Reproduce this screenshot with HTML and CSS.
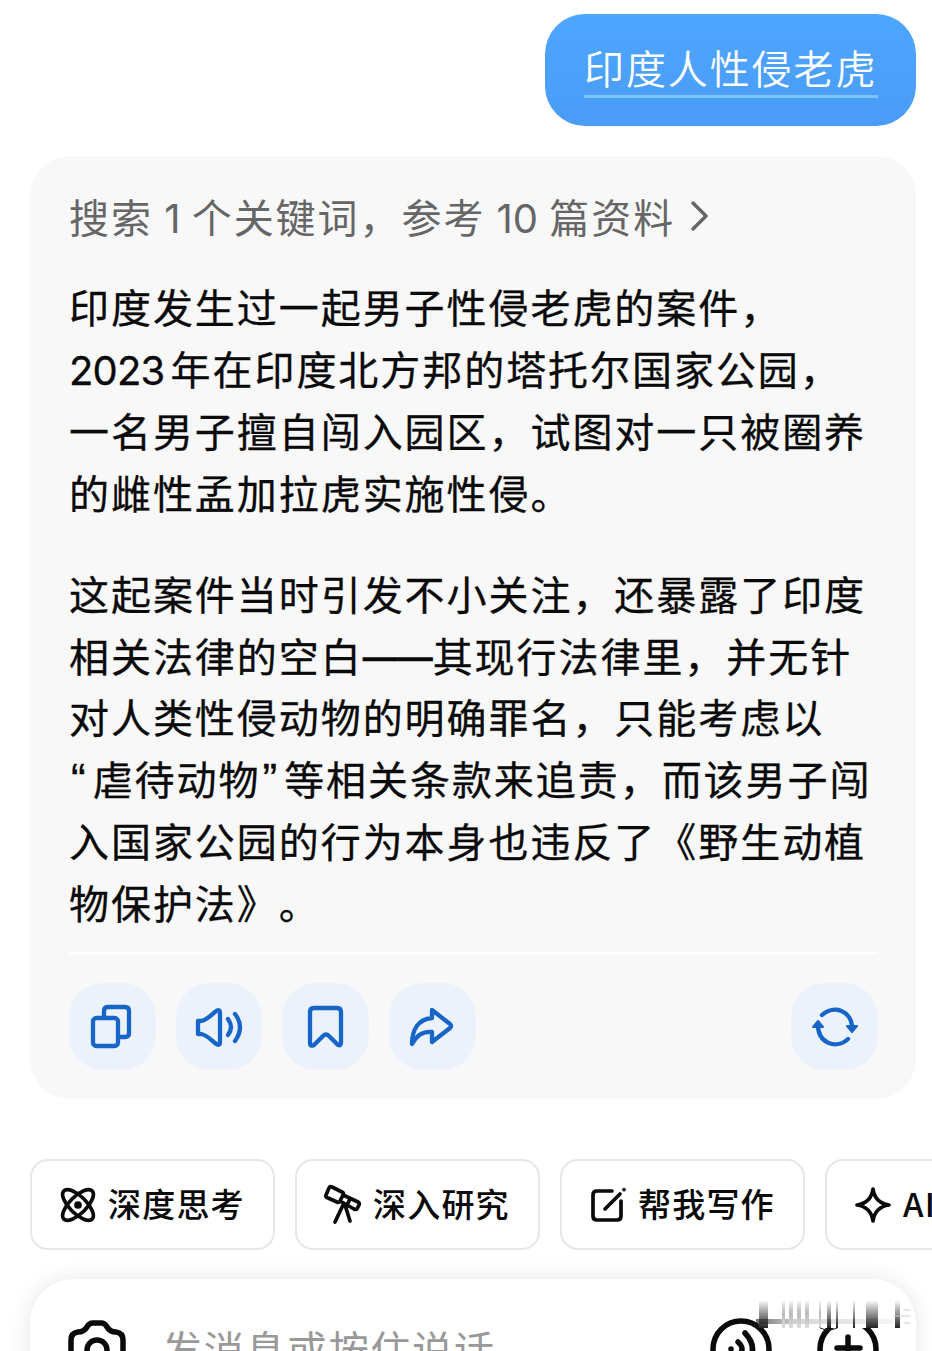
FILE: index.html
```html
<!DOCTYPE html>
<html lang="zh-CN">
<head>
  <meta charset="UTF-8">
  <title>对话</title>
  <link rel="stylesheet" href="styles.css">
</head>
<body>

  <main class="chat">
    <div class="question"><span>印度人性侵老虎</span></div>

    <section class="answer">
      <div class="source">
        <span>搜索<span class="num"> 1 </span>个关键词，参考<span class="num"> 10 </span>篇资料</span>
        <svg width="20" height="32" viewBox="0 0 20 32"><path d="M3 3l13 13L3 29"/></svg>
      </div>

      <p>印度发生过一起男子性侵老虎的案件，<br><span class="num">2023</span>年在印度北方邦的塔托尔国家公园，<br>一名男子擅自闯入园区，试图对一只被圈养<br>的雌性孟加拉虎实施性侵。</p>
      <p>这起案件当时引发不小关注，还暴露了印度<br>相关法律的空白<span class="dash">——</span>其现行法律里，并无针<br>对人类性侵动物的明确罪名，只能考虑以<br><span class="quote">“</span>虐待动物<span class="quote">”</span>等相关条款来追责，而该男子闯<br>入国家公园的行为本身也违反了《野生动植<br>物保护法》。</p>

      <div class="actions">
        <button type="button" aria-label="复制">
          <svg width="44" height="44" viewBox="0 0 44 44"><path d="M14 12V6q0-4 4-4h17q4 0 4 4v22q0 4-4 4h-5"/><rect x="3" y="13" width="25" height="28" rx="3.5"/></svg>
        </button>
        <button type="button" aria-label="朗读">
          <svg width="50" height="44" viewBox="0 0 50 44"><path d="M4 16h3c6-1 10-6 14-9q5-4 5 1v29q0 5-5 1c-4-3-8-8-14-9H4z"/><path d="M34 14q6 8 0 16M41 9q10 13 0 27"/></svg>
        </button>
        <button type="button" aria-label="收藏">
          <svg width="44" height="44" viewBox="0 0 44 44"><path d="M6 7q0-4 4-4h23q4 0 4 4v31q0 3-3 2L25 31q-3-3-6 0l-9 9q-4 2-4-2z"/></svg>
        </button>
        <button type="button" aria-label="分享">
          <svg width="46" height="44" viewBox="0 0 46 44"><path d="M23 5l18 14q2 2 0 4L23 37V27C12 26 7 32 3 39 3 25 9 14 23 13z"/></svg>
        </button>
        <button type="button" class="refresh" aria-label="重新生成">
          <svg width="50" height="44" viewBox="0 0 50 44"><path d="M12 10C24-1 42 6 42 23M38 34C26 45 8 38 8 20"/><path class="solid" d="M37 21h10l-5 6zM3 22h10l-5-6z"/></svg>
        </button>
      </div>
    </section>

    <nav class="tools">
      <a class="tool">
        <svg width="36" height="36" viewBox="0 0 36 36"><ellipse cx="18" cy="18" rx="20" ry="8.5" transform="rotate(45 18 18)"/><ellipse cx="18" cy="18" rx="20" ry="8.5" transform="rotate(-45 18 18)"/><circle class="solid" cx="18" cy="18" r="2"/></svg>
        <span>深度思考</span>
      </a>
      <a class="tool">
        <svg width="36" height="36" viewBox="0 0 36 36"><path d="M7 0l10 5q2 1 1 3l-3 6q-1 2-3 1L3 11q-3-1-2-3l3-7q1-2 3-1zM18 8l15 7q2 1 1 3l-2 4q-1 1-3 0l-14-8M25 12l-3 6M18 18l-8 17M20 18l5 16"/></svg>
        <span>深入研究</span>
      </a>
      <a class="tool">
        <svg width="36" height="36" viewBox="0 0 36 36"><path d="M22 4H7Q3 4 3 8v21q0 4 4 4h20q4 0 4-4V14"/><path d="M15 22L30 7M34 2.5v.1"/></svg>
        <span>帮我写作</span>
      </a>
      <a class="tool">
        <svg width="36" height="36" viewBox="0 0 36 36"><path d="M18 2q2 14 16 16-14 2-16 16Q16 20 2 18 16 16 18 2z"/></svg>
        <span>AI</span>
      </a>
    </nav>

    <div class="composer">
      <svg class="camera" width="58" height="58" viewBox="0 0 58 58"><path d="M3 44V20q0-7 7-8 6 0 9-5 2-4 6-4h8q4 0 6 4 3 5 9 5 7 1 7 8v24q0 8-8 8H11q-8 0-8-8z"/><circle cx="29" cy="30" r="10"/></svg>
      <span class="placeholder">发消息或按住说话</span>
      <svg class="voice" width="62" height="62" viewBox="0 0 62 62"><circle cx="31" cy="31" r="28"/><path d="M21 31v.1M28 24q8 7 0 14M35 15q15 16 0 32"/></svg>
      <svg class="plus" width="62" height="62" viewBox="0 0 62 62"><circle cx="31" cy="31" r="28"/><path d="M31 19v24M20 30h23"/></svg>
      <svg class="smear" width="154" height="32" viewBox="0 0 154 32">
        <defs>
          <linearGradient id="fade" x2="0" y2="1"><stop stop-color="#222" stop-opacity="0"/><stop offset="1" stop-color="#222"/></linearGradient>
          <linearGradient id="pale" x2="0" y2="1"><stop stop-color="#999" stop-opacity="0"/><stop offset=".5" stop-color="#bbb"/><stop offset="1" stop-color="#ddd"/></linearGradient>
          <linearGradient id="trail"><stop stop-color="#111"/><stop offset=".3" stop-color="#bbb"/><stop offset="1" stop-color="#eee"/></linearGradient>
        </defs>
        <path d="M3 0h128v28H3z" fill="#fff"/>
        <path d="M0 19h138v5H0z" fill="url(#trail)" opacity=".6"/>
        <path d="M3 0h9v28H3zM71 0h4v28h-4zM80 0h2v28h-2zM97 0h2v28h-2zM110 0h12v28h-12zM139 0h5v28h-5z" fill="url(#fade)"/>
        <path d="M26 0h3v28h-3zM33 0h4v28h-4zM41 0h4v28h-4zM49 0h4v28h-4zM63 0h2v28h-2z" fill="url(#pale)"/>
        <path class="line" d="M64 28q9 4 17 0"/>
        <path class="line thin" d="M148 10h6M138 16h16M148 23h6"/>
      </svg>
    </div>
  </main>

</body>
</html>
```

FILE: styles.css
```css
* {
  box-sizing: border-box;
}
body {
  margin: 0;
  height: 1351px;
  overflow: hidden;
  background: #fff;
  color: #0a0a0a;
  font-family: "Noto Sans CJK SC", sans-serif;
  text-spacing-trim: space-all;
}
svg {
  flex: none;
  overflow: visible;
  fill: none;
  stroke: currentColor;
  stroke-linecap: round;
  stroke-linejoin: round;
}
.solid {
  fill: currentColor;
}
.chat {
  display: flex;
  flex-direction: column;
  height: 1351px;
  padding: 14px 16px 0 30px;
  overflow: hidden;
}
.question {
  flex: none;
  align-self: flex-end;
  width: 371px;
  height: 112px;
  padding: 24px 0 0 39px;
  border-radius: 40px;
  background: linear-gradient(#4ea6fe, #4a9cf6);
  color: #fff;
  font-size: 40px;
  font-weight: 350;
  letter-spacing: 1.9px;
}
.question span {
  display: block;
  width: 294px;
  height: 60px;
  border-bottom: 3px solid #7cc4ff;
  line-height: 59px;
  white-space: nowrap;
}
.answer {
  flex: none;
  height: 943px;
  margin-top: 30px;
  padding: 29px 38px 0 39px;
  border-radius: 40px;
  background: #f8f8f8;
}
.source {
  display: flex;
  align-items: center;
  gap: 15px;
  height: 62px;
  color: #666;
  font-size: 40px;
  letter-spacing: 1.95px;
  line-height: 60px;
  white-space: nowrap;
}
.source svg {
  stroke-width: 3.5;
}
.source .num {
  margin-right: 0;
  letter-spacing: 0;
}
.num {
  margin-right: 6px;
  font-family: Inter, sans-serif;
  letter-spacing: -0.8px;
  line-height: 1;
}
.answer p {
  margin: 29px 0 0;
  font-size: 40px;
  letter-spacing: 1.95px;
  line-height: 61.9px;
  white-space: nowrap;
  -webkit-text-stroke: 0.3px;
}
.answer p + p {
  margin-top: 39px;
}
.dash {
  font-family: "Liberation Sans", sans-serif;
  font-size: 35px;
  font-weight: bold;
  letter-spacing: 0;
  line-height: 1;
  position: relative;
  top: -3px;
}
.quote {
  padding-left: 2px;
  font-family: "Liberation Sans", sans-serif;
  font-size: 44px;
  letter-spacing: 7px;
  line-height: 1;
}
.actions {
  display: flex;
  gap: 20px;
  margin-top: 18px;
  padding-top: 29px;
  border-top: 2px solid #fff;
}
.actions button {
  display: flex;
  align-items: center;
  justify-content: center;
  width: 86.7px;
  height: 87px;
  padding: 0;
  border: 0;
  border-radius: 34px;
  background: #ebf2fc;
  color: #1765c8;
}
.actions svg {
  stroke-width: 4.3;
}
.actions .refresh {
  margin-left: auto;
}
.refresh .solid {
  stroke-width: 2;
}
.tools {
  display: flex;
  flex: none;
  gap: 20px;
  margin-top: 60px;
}
.tool {
  display: flex;
  flex: none;
  align-items: center;
  gap: 12px;
  width: 245px;
  height: 91px;
  padding-left: 28px;
  border: 2px solid #e7e7e7;
  border-radius: 18px;
  font-size: 33px;
  font-weight: 500;
  letter-spacing: 1.2px;
  white-space: nowrap;
}
.tool span {
  padding-bottom: 3px;
}
.tool svg {
  stroke-width: 3.7;
}
.composer {
  position: relative;
  display: flex;
  flex: none;
  align-items: center;
  height: 140px;
  margin-top: 29px;
  padding: 0 37px 0 38px;
  border-radius: 44px;
  background: #fff;
  box-shadow: 0 0 22px rgba(0, 0, 0, 0.1);
}
.composer svg {
  stroke-width: 5.5;
}
.placeholder {
  margin-left: 36px;
  padding-bottom: 2px;
  color: #999;
  font-size: 40px;
  letter-spacing: 1.7px;
}
.voice {
  margin-left: auto;
}
.plus {
  margin-left: 45px;
}
.composer .smear {
  position: absolute;
  top: 21px;
  right: 6px;
  stroke: none;
}
.smear .line {
  stroke: #222;
  stroke-width: 1;
}
.smear .thin {
  stroke: #ccc;
}
```
